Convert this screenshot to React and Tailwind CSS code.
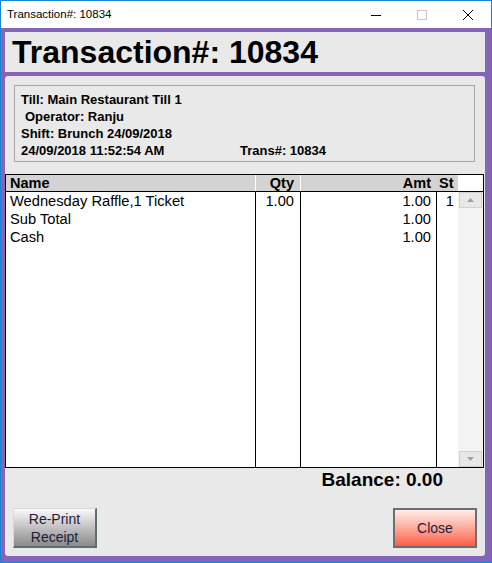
import React from 'react';

const rows = [
  { name: 'Wednesday Raffle,1 Ticket', qty: '1.00', amt: '1.00', st: '1' },
  { name: 'Sub Total', qty: '', amt: '1.00', st: '' },
  { name: 'Cash', qty: '', amt: '1.00', st: '' },
];

const font = { fontFamily: '"Liberation Sans", Arial, sans-serif' };

const TitleBar = () => (
  <div className="h-[27px] flex items-center bg-white shrink-0">
    <span className="pl-[6px] text-[11.5px] text-black flex-1">Transaction#: 10834</span>
    <div className="w-[46px] h-[27px] flex items-center justify-center">
      <svg width="12" height="12" viewBox="0 0 12 12">
        <path d="M1 6.5h10" stroke="#000" strokeWidth="1" />
      </svg>
    </div>
    <div className="w-[46px] h-[27px] flex items-center justify-center">
      <svg width="12" height="12" viewBox="0 0 12 12">
        <rect x="1.5" y="1.5" width="9" height="9" fill="none" stroke="#c8c8c8" strokeWidth="1" />
      </svg>
    </div>
    <div className="w-[46px] h-[27px] flex items-center justify-center">
      <svg width="12" height="12" viewBox="0 0 12 12">
        <path d="M1 1L11 11M11 1L1 11" stroke="#000" strokeWidth="1" />
      </svg>
    </div>
  </div>
);

const ScrollButton = ({ up }) => (
  <div className="h-[16px] mx-[1px] bg-[#e8e8e8] border border-[#d0d0d0] flex items-center justify-center">
    <svg width="7" height="4" viewBox="0 0 7 4">
      <path d={up ? 'M0 4L3.5 0L7 4Z' : 'M0 0L3.5 4L7 0Z'} fill="#a0a0a0" />
    </svg>
  </div>
);

const TransactionTable = () => (
  <div className="w-[479px] h-[294px] border border-black bg-white flex flex-col text-black">
    {/* header */}
    <div className="h-[17px] flex border-b border-black text-[14.5px] font-bold leading-[17px] shrink-0">
      <div className="w-[250px] bg-[#d3d3d3] border-r border-white pl-[4px]">Name</div>
      <div className="w-[45px] bg-[#d3d3d3] border-r border-white text-right pr-[6px]">Qty</div>
      <div className="w-[136px] bg-[#d3d3d3] border-r border-[#d3d3d3] text-right pr-[5px]">Amt</div>
      <div className="w-[21px] bg-[#d3d3d3] pl-[2px]">St</div>
      <div className="w-[25px] bg-white"></div>
    </div>
    {/* body */}
    <div className="flex-1 flex text-[14.7px] leading-[18px]">
      <div className="w-[250px] border-r border-black pl-[4px]">
        {rows.map((r) => (
          <div key={r.name} className="h-[18px] whitespace-nowrap">{r.name}</div>
        ))}
      </div>
      <div className="w-[45px] border-r border-black text-right pr-[6px]">
        {rows.map((r, i) => (
          <div key={i} className="h-[18px]">{r.qty}</div>
        ))}
      </div>
      <div className="w-[136px] border-r border-black text-right pr-[5px]">
        {rows.map((r, i) => (
          <div key={i} className="h-[18px]">{r.amt}</div>
        ))}
      </div>
      <div className="w-[21px] text-right pr-[4px]">
        {rows.map((r, i) => (
          <div key={i} className="h-[18px]">{r.st}</div>
        ))}
      </div>
      <div className="w-[25px] bg-[#f3f3f3] flex flex-col justify-between">
        <ScrollButton up />
        <ScrollButton />
      </div>
    </div>
  </div>
);

export default function App() {
  return (
    <div style={font} className="w-[492px] h-[563px] border border-[#1883d7] bg-white flex flex-col">
      <TitleBar />
      <div className="flex-1 bg-[#8764b8] pl-[4px] pr-[6px] pt-[4px] pb-[6px] flex flex-col gap-[4px]">
        <div className="h-[40px] bg-[#e9e9e9] flex items-center pl-[7px] shrink-0">
          <span className="text-[32px] font-bold leading-none text-black">Transaction#: 10834</span>
        </div>
        <div className="flex-1 bg-[#e9e9e9] rounded-[3px] flex flex-col">
          <div className="ml-[9px] mr-[10px] mt-[9px] h-[77px] border border-[#a8a8a8] pt-[5px] pl-[6px] text-[13px] font-bold leading-[17px] text-black">
            <div>Till: Main Restaurant Till 1</div>
            <div className="pl-[4px]">Operator: Ranju</div>
            <div>Shift: Brunch 24/09/2018</div>
            <div className="flex">
              <span className="w-[219px]">24/09/2018 11:52:54 AM</span>
              <span>Trans#: 10834</span>
            </div>
          </div>
          <div className="mt-[12px]">
            <TransactionTable />
          </div>
          <div className="h-[24px] flex items-center justify-end pr-[42px] text-[19px] font-bold text-black">
            Balance: 0.00
          </div>
          <div className="mt-[16px] flex justify-between pl-[8px] pr-[8px]">
            <button className="w-[84px] h-[40px] bg-gradient-to-b from-[#fbfbfb] to-[#8a8a8a] border-t border-l border-[#d8d8d8] border-r-2 border-b-2 border-r-[#5f6e6e] border-b-[#5f6e6e] text-[14px] leading-[18px] text-[#1c1c3c]">
              Re-Print<br />Receipt
            </button>
            <button className="w-[84px] h-[40px] bg-gradient-to-b from-[#ffeeea] to-[#ff5a46] border-2 border-[#6e6e6e] text-[14px] text-[#1c1c3c]">
              Close
            </button>
          </div>
        </div>
      </div>
    </div>
  );
}
